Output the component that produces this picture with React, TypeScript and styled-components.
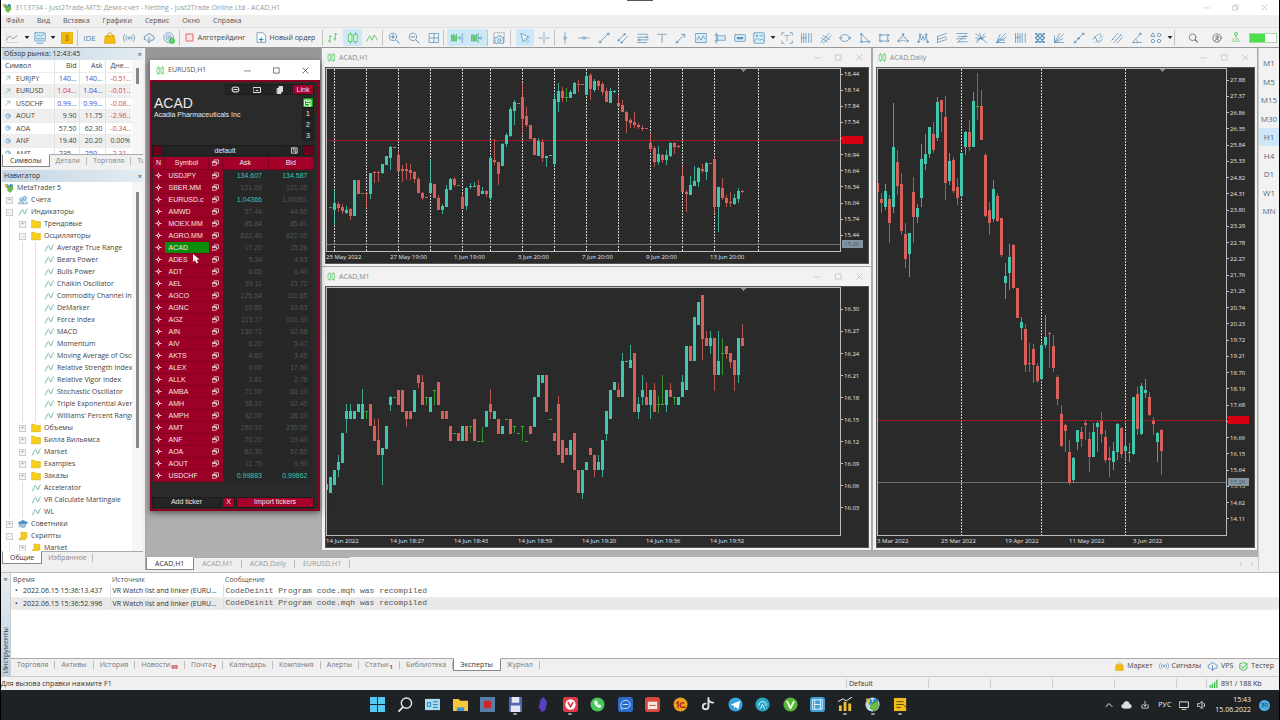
import React from "react";
import styled, { createGlobalStyle, css } from "styled-components";

const UI = '"Open Sans", "Noto Sans", sans-serif';
const ARIAL = '"Liberation Sans", Arial, sans-serif';

const GlobalStyle = createGlobalStyle`
  *, *::before, *::after { box-sizing: border-box; }
  body { margin: 0; background: #efefef; font: 7px/12px ${UI}; color: #444; }
  button { font: inherit; color: inherit; border: 0; margin: 0; padding: 0; background: none; white-space: nowrap; }
  ul { list-style: none; margin: 0; padding: 0; }
  table { border-collapse: collapse; border-spacing: 0; }
  td, th { padding: 0; font-weight: 400; text-align: left; }
  h1, h2, p { margin: 0; font: inherit; }
  svg { display: block; flex: none; }
`;

/* ---------- data ---------- */

type Tone = "g" | "r" | "l";
type Candle = [Tone, number, number, number, number];

const parse = (s: string): Candle[] =>
  s.trim().split(/\s+/).map((c) => {
    const n = c.slice(1).split(",").map(Number);
    const [a, b, d, e] = n.length === 2 ? [n[0], n[0], n[1], n[1]] : n;
    return [c[0] as Tone, a, b, d, e];
  });

const H1_DATA = parse(`
l470,473 g420,458,480,525 r455,463,475,487 r462,472,483,492 g468,479,488,492 r475,478,498,510 g391,498 r391,432 l428,430,432,432
r425,430,433,475 g368,368,432,448 r362,366,370,400 r364,367,370,395 g343,343,369,372 g318,345 g289,291,323,360 r290,293 r303,316,362,362
r345,358,362,395 r340,358,363,390 r342,360,370,390 r362,366,388,400 r380,388,430,430 r425,430,443,450 r440,443 g328,400,430,430 r402,445
r435,443,480,480 g462,468,480,492 g405,418,470,470 g385,388,420,420 r380,388,406,410 l405,408 r432,441,478,478 g412,415,468,480
g398,407,411,418 g395,407,410,412 r390,406,438,438 g412,424,433,433 r420,424,432,440 g320,325,443,450 r266,330,336,345 r335,335,372,405
g278,282,348,348 g250,254,282,290 g170,178,257,262 g150,156,182,225 r158,161 r100,140,206,250 r172,198,224,230 r224,267 r264,315
g264,274,318,318 r266,275,325,335 g317,319,323,352 g316,319 g130,146,343,348 g100,122,155,185 r112,124,144,155 l115,141,144,155
g120,125,145,145 g96,98,133,133 r90,101,104,125 r101,104 g70,78,136,136 r70,74,118,150 g88,92,120,125 r90,93,108,120 r95,103,127,135
r115,122,155,155 g115,122,158,158 g120,122,127,130 r135,158,167,167 r150,166,187,187 r182,187,214,250 r205,210,218,235 r185,215,225,235
r218,225,232,238 r226,233,236,242 r235,238 r250,280,297,305 r288,294,336,352 g288,312,336,344 r312,315,331,340 g300,316,330,345
g275,279,318,322 r275,279,290,312 r285,288,291,295 r348,378,427,427 r420,426,433,485 g378,405,435,435 g348,392,408,408 g352,354,395,410
r342,357,362,370 g336,338,365,390 r340,343 r322,326,472,490 g410,412,472,545 r385,414,443,450 r436,443,458,472 r426,457,460,472
g432,444,462,465 g415,424,448,460 r420,424,427,430`);

const M1_DATA = parse(`
g640,648,668,668 g628,675 g606,652 g562,584,606,628 g497,585 g408,430,455,495 g408,430,455,455 g430,455 g408,432 g365,408,455,455
l430,430,433,455 r408,476 r455,476,520,520 r455,517,563,563 g540,540,563,652 g475,543 g386,387,411,430 l387,390 r366,411 r366,432
r430,430,455,478 r430,455 g366,432 r322,322,346,360 r322,343,411,411 l387,387,390,411 g387,432 l366,366,369,411 r343,411 r430,455 r430,455
r475,521 l496,499 r497,521 g475,521 r475,521 l475,475,478,497 r453,521 l519,522 l477,519,522,522 g430,478 r365,408,432,455 g430,455
r453,498 g475,498 l453,456 r453,498 l475,475,478,497 l497,500 l475,475,478,521 l519,522 r475,498 g387,478 g322,388 g322,346 r322,432
l453,456 r497,521 r385,408,563,563 r518,585 r540,563 g518,563 r497,607 r606,675 g606,606,675,695 g584,607 r540,563 r562,562,607,628
g562,584,607,607 g518,518,607,628 g430,430,498,520 g366,455 g343,368 r345,366,388,388 g255,279,388,388 g279,282 g232,278,300,300
r255,432 g387,409,432,455 g322,366,388,411 r343,387,411,411 g366,366,411,455 r345,366,432,432 l385,408,411,435 l322,408,411,411
g366,366,411,432 r345,366,388,388 l387,387,390,411 g387,411 g322,343,388,388 g234,368 r234,280 g147,280 g102,171 r82,82,214,278
r190,212,236,236 g190,212,236,258 r212,212,323,370 g190,279,323,323 l212,256,259,323 r234,234,258,275 r255,256,283,300
r278,278,323,370 g212,212,323,345 r170,212,236,236`);

const DAILY_DATA = parse(`
r395,400,425,425 r430,447,458,490 g403,422,470,480 r435,447,520,580 g158,290,472,490 r300,336,408,435 r370,403,542,555 r520,553,628,655
g548,550,611,680 r380,426,500,580 g462,474,500,520 g283,327,444,470 g252,312,342,360 g230,232,313,325 r215,252,300,310 g140,157,265,272
r150,150,186,245 r138,202,400,450 g310,333,394,405 r320,331,424,430 r385,412,444,465 g308,310,437,440 g242,247,292,315 r210,247,290,302
g125,153,290,290 l70,167,170,210 r120,168,270,270 r310,316,498,500 r455,480,520,555 g390,418,508,515 r430,438,512,515 r504,505,615,622
g640,678,698,748 g582,620,668,720 r583,584,714,718 r714,714,803,805 g800,817,834,870 r822,836,946,965 r880,938,942,965 r883,897,944,1000
r940,949,993,1000 g880,885,988,990 g795,860,886,895 r845,848,852,955 r855,889,955,965 r975,982,1048,1065 r1065,1092,1188,1190
r1122,1125,1142,1205 r1170,1206,1300,1305 g1222,1224,1290,1300 g1140,1140,1177,1200 r1130,1146,1168,1190 r1110,1120,1124,1170
r1145,1168,1222,1265 g1120,1146,1220,1222 g1112,1118,1131,1205 r1085,1112,1152,1180 r1140,1161,1229,1240 r1190,1224,1230,1280
g1175,1202,1235,1260 g1118,1121,1207,1230 r1130,1134,1213,1225 g1145,1188,1203,1230 g1180,1205,1210,1235 g1040,1041,1212,1215
r1010,1033,1138,1155 g1000,1008,1152,1155 g988,1021,1028,1045 r1025,1041,1095,1098 r1100,1113,1122,1155 g1145,1149,1175,1235
r1138,1140,1203,1275`);

const range = (from: number, to: number, step: number) => {
  const out: string[] = [];
  const n = Math.round((from - to) / step);
  for (let i = 0; i <= n; i++) out.push((from - i * step).toFixed(2));
  return out;
};

const TICKERS: [string, string, string, ("a" | "b" | "ab")?][] = [
  ["USDJPY", "134.607", "134.587", "ab"], ["SBER.MM", "121.09", "121.05"], ["EURUSD.c", "1.04366", "1.04361", "a"],
  ["AMWD", "57.44", "44.50"], ["MOEX.MM", "85.84", "85.81"], ["AGRO.MM", "822.40", "822.00"], ["ACAD", "17.20", "15.26"],
  ["ADES", "5.34", "4.63"], ["ADT", "6.65", "6.40"], ["AEL", "39.11", "23.72"], ["AGCO", "125.54", "111.65"],
  ["AGNC", "10.85", "10.63"], ["AGZ", "113.77", "101.30"], ["AIN", "130.72", "32.68"], ["AIV", "6.20", "5.47"],
  ["AKTS", "4.60", "3.45"], ["ALEX", "0.00", "17.00"], ["ALLK", "2.81", "2.76"], ["AMBA", "71.00", "66.10"],
  ["AMH", "38.10", "32.40"], ["AMPH", "32.00", "28.10"], ["AMT", "250.10", "235.00"], ["ANF", "20.20", "19.40"],
  ["AOA", "62.30", "57.50"], ["AOUT", "11.75", "9.90"], ["USDCHF", "0.99883", "0.99862", "ab"],
];

const QUOTES: [string, string, string, string, string, string][] = [
  ["EURJPY", "140...", "140...", "-0.51...", "#4a4ac8", "#4a4ac8"],
  ["EURUSD", "1.04...", "1.04...", "-0.01...", "#d83a44", "#4a4ac8"],
  ["USDCHF", "0.99...", "0.99...", "-0.08...", "#4a4ac8", "#4a4ac8"],
  ["AOUT", "9.90", "11.75", "-2.96...", "#444", "#444"],
  ["AOA", "57.50", "62.30", "-0.34...", "#444", "#444"],
  ["ANF", "19.40", "20.20", "0.00%", "#444", "#444"],
  ["AMT", "235...", "250...", "-2.31...", "#444", "#4a4ac8"],
];

type Node = [number, string, string, string?];
const TREE: Node[] = [
  [0, "mt", "MetaTrader 5"], [1, "users", "Счета", "+"], [1, "ind", "Индикаторы", "-"],
  [2, "folder", "Трендовые", "+"], [2, "folder", "Осцилляторы", "-"],
  ...["Average True Range", "Bears Power", "Bulls Power", "Chaikin Oscillator", "Commodity Channel Index", "DeMarker",
    "Force Index", "MACD", "Momentum", "Moving Average of Oscillator", "Relative Strength Index", "Relative Vigor Index",
    "Stochastic Oscillator", "Triple Exponential Average", "Williams' Percent Range"].map((t): Node => [3, "ind", t]),
  [2, "folder", "Объемы", "+"], [2, "folder", "Билла Вильямса", "+"], [2, "ind", "Market", "+"],
  [2, "folder", "Examples", "+"], [2, "folder", "Заказы", "+"], [2, "ind", "Accelerator"],
  [2, "ind", "VR Calculate Martingale"], [2, "ind", "WL"], [1, "hat", "Советники", "+"],
  [1, "scroll", "Скрипты", "-"], [2, "scroll", "Market", "+"],
];

/* ---------- icons ---------- */

const B = "#5a90ba";
const G = "#3fbf4f";
const Svg = ({ s = 14, children, c = B, w = 1 }: { s?: number; children: React.ReactNode; c?: string; w?: number }) => (
  <svg width={s} height={s} viewBox="0 0 16 16" fill="none" stroke={c} strokeWidth={w} strokeLinecap="round" strokeLinejoin="round" aria-hidden="true">
    {children}
  </svg>
);

const ICONS: Record<string, React.ReactNode> = {
  chart: <><path d="M1 2v12h14" stroke="#ccc" /><path d="M1 10l4-5 4 4 6-4" stroke="#6c8c7c" /></>,
  monitor: <><rect x="1" y="1" width="14" height="11" rx="1" fill="#d8effa" /><path d="M3 6l3-2 3 2 4-3M3 9h10M4 15h8" /></>,
  dollar: <><rect x="0" y="0" width="16" height="16" rx="1" fill="#f2bd10" stroke="#dba800" /><path d="M10.500 5.500C9 4 5.500 4.500 6 6.500s4.500 1 4.500 3-3.500 2.500-5 1M8 3.500v9" stroke="#a87800" /></>,
  bag: <><path d="M2 5h12l1 10H1z" fill="#f2bd10" stroke="#e0a800" /><path d="M5 6V4a3 3 0 016 0v2" stroke="#c89000" /></>,
  signal: <><circle cx="8" cy="8" r="1.500" /><path d="M5 5a4 4 0 000 6M11 5a4 4 0 010 6M2.500 3a7 7 0 000 10M13.500 3a7 7 0 010 10" /></>,
  cloud: <path d="M4.500 11a3 3 0 010-6 4 4 0 017.500 0 3 3 0 010 6h-1.500M8 7v7M6 12l2 2 2-2" strokeWidth="1.300" />,
  target: <><circle cx="7.500" cy="7.500" r="6.500" /><circle cx="7.500" cy="7.500" r="3.500" /><circle cx="7.500" cy="7.500" r="1" /><circle cx="12" cy="12" r="3.500" fill="#63d26b" stroke={G} /></>,
  stop: <rect x="3" y="3" width="10" height="10" rx="1" fill="#fbe3e3" stroke="#dd6a6a" strokeWidth="1.500" />,
  order: <><path d="M2 1h8l4 4v10H2z" fill="#f8fcff" stroke="#5d7f9a" /><path d="M5 11h5M7.500 8.500v5" stroke="#2f7fbf" strokeWidth="1.500" /></>,
  bars: <path d="M4 5v9M2 12h2M4 6h2M11 2v9M9 9h2M11 3h2" stroke={G} />,
  candles: <path d="M4.500 1v2M4.500 13v2M2.500 3h4v10h-4zM11.500 1v2M11.500 13v2M9.500 3h4v10h-4z" stroke={G} fill="#dff7e2" />,
  line: <path d="M1 12l4-7 3 6 3-7 4 6" stroke={G} />,
  zin: <><circle cx="6.500" cy="6.500" r="5" /><path d="M10.500 10.500L15 15M4 6.500h5M6.500 4v5" strokeWidth="1.300" /></>,
  zout: <><circle cx="6.500" cy="6.500" r="5" /><path d="M10.500 10.500L15 15M4 6.500h5" strokeWidth="1.300" /></>,
  grid: <path d="M2 2h12v12H2zM8 2v12M2 8h12" />,
  shiftA: <><path d="M1 4v8M3 3v9M5 5v7M7 3v9" stroke={G} strokeWidth="1.500" /><path d="M9 8h4M11 6l2 2-2 2M15 2v12" /></>,
  shiftB: <><path d="M1 4v8M3 3v9M5 5v7M7 3v9" stroke={G} strokeWidth="1.500" /><path d="M9.500 2v12M15 8h-4M13 6l-2 2 2 2" /></>,
  camera: <><path d="M1 15V1h14v14" stroke="#888" strokeDasharray="1 2" /><path d="M3 7h3l1-2h3l1 2h3v8H3z" fill="#dceefa" /><circle cx="8.500" cy="11" r="2" /></>,
  cursor: <path d="M3 2l10 5-4 1.500 4 4-1.500 1.500-4-4L6 13z" fill="#eef8ff" />,
  cross: <path d="M8 1v5M8 10v5M1 8h5M10 8h5M8 8h.1" />,
  vline: <><path d="M8 1v5M8 10v5" /><circle cx="8" cy="8" r="1.700" /></>,
  hline: <><path d="M1 8h5M10 8h5" /><circle cx="8" cy="8" r="1.700" /></>,
  trend: <><path d="M3 13l10-10" /><circle cx="2.500" cy="13.500" r="1.300" /><circle cx="13.500" cy="2.500" r="1.300" /></>,
  channel: <><path d="M2 11l8-8M6 14l8-8" /><circle cx="2" cy="11" r="1" /><circle cx="10" cy="3" r="1" /><circle cx="6" cy="14" r="1" /></>,
  fib: <><path d="M1 3h13M1 7h10M4 10.500h11M1 14h12" /><circle cx="13" cy="7" r="1.300" /><circle cx="2.500" cy="10.500" r="1.300" /></>,
  text: <path d="M2 3h12M8 3v11" stroke="#8ba4b4" strokeWidth="1.400" />,
  arrow: <><path d="M2.500 13.500L13 3M8.500 3H13v4.500" /><circle cx="2.500" cy="13.500" r="1.200" /></>,
  wave: <path d="M1 2h14v12H1zM3 10l2-4 3 5 3-6 2 4" fill="#d8effa" />,
  label: <path d="M3 1v14M1 4h4M1 12h4M5 5h10v6H5z" fill="#d8effa" />,
  button: <><rect x="1" y="3.500" width="14" height="9" rx="1" fill="#d8effa" /><path d="M5 8h6" strokeWidth="3" /></>,
  image: <><rect x="1" y="1" width="14" height="14" rx="1" fill="#d8effa" /><path d="M2 12l4-4 3 3 3-2 3 3" /><circle cx="5" cy="5" r="1" /><path d="M9 5h4" /></>,
  tbox: <><path d="M1 4V1h3M12 1h3v3M15 12v3h-3M4 15H1v-3" /><path d="M4.500 4.500h7M8 4.500V12" stroke="#8ba4b4" /></>,
  cycles: <path d="M2 2v12M5 2v12M8 2v12M11.500 2v12M15 2v12M2 8h6" />,
  pitch: <path d="M1 14L12 2M4 15L15 5M2 8l8 5M4 5l9 5" />,
  ellipse: <><ellipse cx="8" cy="8" rx="6" ry="4.500" /><circle cx="2" cy="8" r="1.200" fill="#fff" /><circle cx="14" cy="8" r="1.200" fill="#fff" /></>,
  triangle: <><path d="M3 3v10h10z" /><circle cx="3" cy="3" r="1.200" fill="#fff" /><circle cx="13" cy="13" r="1.200" fill="#fff" /><circle cx="3" cy="13" r="1.200" fill="#fff" /></>,
  rect: <><path d="M3 4h10v8H3z" /><circle cx="3" cy="4" r="1.300" fill="#fff" /><circle cx="13" cy="4" r="1.300" fill="#fff" /><circle cx="3" cy="12" r="1.300" fill="#fff" /><circle cx="13" cy="12" r="1.300" fill="#fff" /></>,
  ell5: <><path d="M2 12l2-4h2l2-5 2 5h2l2 4M5 12l3-1 3 1" strokeDasharray="3 1.500" /><circle cx="8" cy="3" r="1" /><circle cx="2" cy="12" r="1" /><circle cx="14" cy="12" r="1" /></>,
  ell3: <><path d="M2 13l2-8 2 6 2-6 2 6 2-6 2 8" /><circle cx="4" cy="3.500" r="1.200" /><circle cx="12" cy="3.500" r="1.200" /><circle cx="2" cy="13" r="1.200" /><circle cx="14" cy="13" r="1.200" /></>,
  regr: <path d="M2 6l12-4M2 10l9-3M2 14l12-4M2 6v8M12 7h2" />,
  gann: <path d="M1 2h14M3 6h12M1 9h12M3 13h12M2 14L13 4" />,
  fan: <path d="M1 2l14 12M2 14L13 2M6 2l3 8M1 8l10 1M14 6L3 11" />,
  arcs: <path d="M2 14L14 2M2 14L15 7M2 14l5-11M2 14h11M5 10l8 1" />,
  zones: <path d="M2 2v12M5 2v12M8 2v12M11 2v12M15 2v12M2 7h6" />,
  lattice: <path d="M2 2l12 12M14 2L2 14M8 2l6 6-6 6-6-6zM2 2h2M12 2h2M2 14h2M12 14h2" strokeWidth="1.500" />,
  rays: <path d="M2 14L14 3M2 14L9 2M2 14V5M2 14h12M2 14l11-5" />,
  tl: <><path d="M2.500 13.500L13 3" /><circle cx="2.500" cy="13.500" r="1.200" /><circle cx="7.500" cy="8.500" r="1.200" /><circle cx="13.500" cy="2.500" r="1.200" /></>,
  dash: <path d="M1 10l7-7M5 14l3-3M10 9l4-4M4 6l3 6M11 2v4M8 14l6-4" strokeDasharray="3 1" />,
  para: <path d="M1 11l8-9M4 14L13 4M8 15l7-8M2 10h1M12 4h2" />,
  angle: <><path d="M2 14L12 3M2 14h12M9 14a5 5 0 00-2-4" /><circle cx="12.500" cy="2.500" r="1.200" /></>,
  shapes: <><path d="M4 1.500L6.500 6h-5z" /><circle cx="12" cy="4" r="2.300" /><circle cx="4" cy="12" r="2.300" /><circle cx="12" cy="12" r="2.300" /></>,
  search: <><circle cx="7.500" cy="7" r="4.500" stroke="#666" /><path d="M11 10.500l3 3" stroke="#666" strokeWidth="1.400" /></>,
  user: <><circle cx="8" cy="8" r="5.500" stroke="#555" /><circle cx="8" cy="6.800" r="1.700" stroke="#555" /><path d="M5 11.500c1-2.500 5-2.500 6 0" stroke="#555" /></>,
  ind: <path d="M2 13c2-1 3-9 5-9s2 7 4 7 1-7 4-8" stroke="#4fa892" strokeWidth="1.300" />,
  folder: <path d="M1 2h5l2 2h7v10H1z" fill="#f5cf1d" stroke="#dcae10" />,
  users: <><circle cx="10.500" cy="5" r="3" fill="#bfe0f5" /><circle cx="5" cy="7" r="2.500" fill="#bfe0f5" /><path d="M1 14c0-5 8-5 8 0M7 10c3-3 8-1 8 4H1" fill="#d9eefa" /></>,
  hat: <><path d="M0 6l8-4 8 4-8 4z" fill="#4a95d0" /><path d="M4 8v4c2 2 6 2 8 0V8" fill="#9fcbe9" /><path d="M2 7v6" /></>,
  scroll: <path d="M5 2h9v9h-2v3H2v-3h3z" fill="#f5c91d" stroke="#dcae10" />,
  mt: <><path d="M2 3l4-1 2 5 2-5 4 1-1 4-3 1-2-2-3 2z" fill="#2f86d0" stroke="#2f86d0" /><path d="M7 8l6-4 1 6-4 5-4-3z" fill="#6fc03a" stroke="#4a9a2a" /><path d="M2 2l3 1-1 4z" fill="#f2c81d" stroke="#f2c81d" /></>,
};

const Icon = ({ n, s }: { n: string; s?: number }) => <Svg s={s}>{ICONS[n]}</Svg>;

/* ---------- frame ---------- */

const Screen = styled.div`
  display: flex; flex-direction: column; height: 100vh; min-width: 960px; overflow: hidden;
  border: solid #000; border-width: 0 1px; background: #efefef;
`;
const TitleBar = styled.header`
  display: flex; align-items: center; height: 15px; padding: 0 11px 0 1px; gap: 3px; background: #fff; color: #999; position: relative;
  h1 { flex: 1; }
`;
const Notch = styled.span`
  position: absolute; top: 0; left: 50%; width: 26px; height: 1px; margin-left: -13px; background: #555;
`;
const WinButtons = styled.div<{ $gap?: number; $c?: string }>`
  display: flex; align-items: center; gap: ${(p) => p.$gap ?? 20}px; color: ${(p) => p.$c ?? "#bbb"};
`;
const MenuBar = styled.nav`
  display: flex; height: 12px; padding-left: 5px; gap: 13px; color: #555;
`;
const Toolbar = styled.div`
  display: flex; align-items: center; height: 21px; border-top: 1px solid #e0e0e0; border-bottom: 1px solid #999;
  background: #f2f2f2;
`;
const Tool = styled.button<{ $w?: number; $on?: boolean }>`
  display: flex; align-items: center; justify-content: center; gap: 3px; height: 17px;
  flex: ${(p) => (p.$w ? `0 0 ${p.$w}px` : "1 1 0")};
  background: ${(p) => (p.$on ? "#cde9f8" : "none")};
`;
const Caret = styled.span`
  flex: none; width: 8px; height: 3px; background: #222; clip-path: polygon(20% 0, 80% 0, 50% 100%);
`;
const Sep = styled.i<{ $m?: number }>`
  flex: none; width: 1px; height: 16px; margin-right: ${(p) => p.$m ?? 0}px; background: #c4c4c4;
`;
const Ide = styled.span`
  color: #4a86b4; font-size: 8px;
`;
const Level = styled.span`
  display: flex; flex-direction: column; align-items: center; color: #3fbf4f; font-size: 5px; line-height: 5px;
`;
const Battery = styled.span`
  flex: none; width: 28px; height: 10px; margin: 0 2px 0 0; border: 1px solid #a8d8a8;
  background: linear-gradient(90deg, #4be04b 56%, #fff 56%);
`;

const Middle = styled.main`
  display: grid; grid-template-columns: 145px minmax(0, 1fr) 21px; flex: 1; min-height: 0;
`;
const Side = styled.aside`
  display: flex; flex-direction: column; min-height: 0; padding: 0 2px 6px 1px; border-right: 1px solid #aaa; background: #f0f0f0;
`;
const PanelHead = styled.h2`
  display: flex; flex: none; justify-content: space-between; height: 12px; padding: 0 1px 0 2px; color: #333;
  background: linear-gradient(90deg, #c6d6e4, #e2ecf2);
`;
const CloseX = styled.button`
  color: #444; font-size: 8px;
`;
const Clip = styled.div<{ $h?: number }>`
  display: flex; min-height: 0; overflow: hidden; background: #fff;
  flex: ${(p) => (p.$h ? `0 0 ${p.$h}px` : "1 1 0")};
`;
const Scroll = styled.div<{ $top: number; $h: number }>`
  flex: none; width: 11px; background: #f6f6f6;
  &::before { content: ""; display: block; width: 3px; height: ${(p) => p.$h}px; margin: ${(p) => p.$top}px 0 0 4px; background: #888; }
`;
const QuoteTable = styled.table`
  flex: 1; table-layout: fixed; align-self: flex-start; width: 100%; white-space: nowrap;
  tr { height: 12px; }
  tbody tr:nth-child(even) { height: 13px; background: #efefef; }
  td, th { overflow: hidden; border-right: 1px solid #e2e2e2; border-bottom: 1px solid #ececec; padding-right: 2px; text-align: right; line-height: 11px; }
  td:first-child, th:first-child { text-align: left; padding-left: 3px; }
  td:last-child { color: #e0444c; }
  td:last-child, th:last-child { text-align: left; padding-left: 5px; border-right-color: transparent; }
`;
const Sym = styled.span`
  display: flex; align-items: center; gap: 5px;
`;
const Tabs = styled.div<{ $h?: number }>`
  display: flex; flex: none; height: ${(p) => p.$h ?? 13}px; overflow: hidden; color: #888;
`;
const Tab = styled.button<{ $on?: boolean; $l?: number; $r?: number }>`
  display: flex; align-items: center; padding: 0 ${(p) => p.$r ?? 7}px 0 ${(p) => p.$l ?? 7}px; height: 13px; line-height: 12px;
  border-top: 1px solid #aaa; position: relative;
  &::after { content: ""; position: absolute; right: 0; top: 2px; width: 1px; height: 8px; background: #bbb; }
  ${(p) => p.$on && css`background: #fff; color: #333; border: 1px solid #888; border-top-color: #fff; &::after { display: none; }`}
  small { color: #d83040; font-size: 6px; font-weight: 700; align-self: flex-end; line-height: 8px; padding-left: 1px; }
`;
const TabFill = styled.i`
  flex: 1; border-top: 1px solid #aaa;
`;
const Tree = styled.ul`
  flex: 1; min-width: 0; overflow: hidden; white-space: nowrap;
`;
const TreeRow = styled.li<{ $root?: boolean }>`
  display: flex; align-items: center; height: 12px; padding-left: ${(p) => (p.$root ? 0 : 1)}px;
`;
const Guide = styled.i`
  flex: none; width: 13px; height: 12px; background: linear-gradient(#e2e2e2, #e2e2e2) 6px 0 / 1px 100% no-repeat;
`;
const Expander = styled.button`
  flex: none; width: 7px; height: 7px; margin: 0 3px; border: 1px solid #ccc; background: #f6f6f6; color: #888; font-size: 6px; line-height: 5px;
`;
const TreeIcon = styled.span`
  display: flex; flex: none; justify-content: center; width: 14px; margin-right: 1px;
`;

/* ---------- charts ---------- */

const Desk = styled.section`
  display: flex; flex-direction: column; min-height: 0; min-width: 0;
`;
const Mdi = styled.div`
  position: relative; display: grid; flex: 1; min-height: 0; padding-bottom: 6px;
  grid-template-columns: 175px minmax(0, 551fr) minmax(0, 386fr); grid-template-rows: minmax(0, 219fr) minmax(0, 283fr);
  background: linear-gradient(#989898, #b0b0b0);
`;
const ChartWin = styled.article<{ $area: string }>`
  display: flex; flex-direction: column; grid-area: ${(p) => p.$area}; min-height: 0; padding: 0 2px 2px 3px;
  border: solid #aaa; border-width: 0 1px 1px 1px; background: #f2f2f2;
`;
const ChartHead = styled.header`
  display: flex; flex: none; align-items: center; gap: 3px; height: 19px; padding: 0 6px 0 2px; color: #8a8a8a;
  h2 { flex: 1; }
`;
const ChartBody = styled.div`
  display: grid; flex: 1; min-height: 0; background: #2a2a2a; border: 1px solid #555;
  grid-template-columns: minmax(0, 1fr) 27px; grid-template-rows: minmax(0, 1fr) 11px;
  color: #e6e6e6; font-size: 6px; line-height: 10px;
`;
const Plot = styled.svg`
  width: 100%; height: 100%; border: 1px solid #bbb; min-width: 0;
`;
const Prices = styled.ul<{ $top: number; $bottom: number }>`
  position: relative; display: flex; flex-direction: column; justify-content: space-between;
  padding: ${(p) => p.$top}px 0 ${(p) => p.$bottom}px;
  li { display: flex; align-items: center; gap: 1px; height: 10px; }
  li::before { content: ""; width: 2px; height: 1px; background: #bbb; }
`;
const Tag = styled.span<{ $y: number; $c: string }>`
  position: absolute; left: 1px; top: ${(p) => p.$y}px; width: 21px; height: 8px; line-height: 8px; padding-left: 2px;
  background: ${(p) => p.$c}; color: #4c5a66;
`;
const Times = styled.ul`
  display: grid; grid-auto-flow: column; grid-auto-columns: 64px; overflow: hidden; white-space: nowrap;
`;

const FILL: Record<Tone, string> = { g: "#3fc8ae", r: "#d9605a", l: "#35b030" };

type ChartProps = {
  title: string; area: string; data: Candle[]; x0: number; y0: number; lines: number[]; red?: number; gray?: number;
  prices: string[]; top: number; bottom: number; times: string[]; mark: number; redTag?: number; grayTag?: number;
};
/* candle values are stored at three units per pixel */
const Chart = (p: ChartProps) => {
  const y = (v: number) => Math.round((v - p.y0) / 3);
  return (
    <ChartWin $area={p.area}>
      <ChartHead>
        <Icon n="candles" s={9} />
        <h2>{p.title}</h2>
        <WindowButtons gap={14} s={7} />
      </ChartHead>
      <ChartBody>
        <Plot shapeRendering="crispEdges">
          {p.lines.map((x) => (
            <line key={x} x1={Math.floor(x / 3) + 0.5} x2={Math.floor(x / 3) + 0.5} y1="0" y2="100%" stroke="#d0d0d0" strokeDasharray="2 1" />
          ))}
          {p.red && <rect x="0" y={y(p.red)} width="100%" height="1" fill="#a01c28" />}
          {p.gray && <rect x="0" y={y(p.gray)} width="100%" height="1" fill="#6c7074" />}
          {p.data.map(([c, hi, t, b, lo], i) => {
            const x = p.x0 + i * 4;
            return (
              <g key={i} fill={FILL[c]}>
                <rect x={x} y={y(hi)} width="1" height={Math.max(1, y(lo) - y(hi))} opacity="0.8" />
                <rect x={x - 1} y={y(t)} width="3" height={Math.max(1, y(b) - y(t))} />
              </g>
            );
          })}
          <path d={`M${p.mark - 3} 0h6l-3 3z`} fill="#888" />
        </Plot>
        <Prices $top={p.top} $bottom={p.bottom}>
          {p.prices.map((v) => <li key={v}>{v}</li>)}
          {p.redTag && <Tag $y={p.redTag} $c="#d60010" />}
          {p.grayTag && <Tag $y={p.grayTag} $c="#8494a0">15.26</Tag>}
        </Prices>
        <Times>{p.times.map((t) => <li key={t}>{t}</li>)}</Times>
      </ChartBody>
    </ChartWin>
  );
};

const WindowButtons = ({ gap, s, c, restore }: { gap: number; s: number; c?: string; restore?: boolean }) => (
  <WinButtons $gap={gap} $c={c}>
    <button aria-label="Minimize"><Svg s={s} c="currentColor" w={1.4}><path d="M1 9h14" /></Svg></button>
    <button aria-label="Maximize">
      <Svg s={s} c="currentColor" w={1.6}>{restore ? <path d="M2 5h9v9H2zM5 5V2h9v9h-3" /> : <path d="M2 2h12v12H2z" />}</Svg>
    </button>
    <button aria-label="Close"><Svg s={s} c="currentColor" w={1.8}><path d="M2 2l12 12M14 2L2 14" /></Svg></button>
  </WinButtons>
);

/* ---------- ticker window ---------- */

const Float = styled.article`
  position: absolute; left: 4px; top: 12px; width: 170px; background: #2a2a2a; box-shadow: 0 2px 6px rgba(0, 0, 0, 0.5);
  color: #f0e6e8; font-family: ${ARIAL};
`;
const FloatHead = styled.header`
  display: flex; align-items: center; gap: 3px; height: 20px; padding: 0 11px 0 6px; background: #fff; color: #555; font-family: ${UI};
  h2 { flex: 1; }
`;
const FloatBody = styled.div`
  padding: 2px 3px 0 0; border: solid #86001f; border-width: 2px 3px 2px 2px;
`;
const MiniBar = styled.div`
  display: flex; justify-content: flex-end; gap: 1px; height: 11px;
`;
const Cell = styled.button<{ $w?: number; $bg?: string }>`
  display: flex; align-items: center; justify-content: center; height: 11px;
  flex: ${(p) => (p.$w ? `0 0 ${p.$w}px` : "1 1 0")}; background: ${(p) => p.$bg ?? "#242424"}; border: 1px solid #1c1c1c;
`;
const Heading = styled.div`
  display: flex; justify-content: space-between; height: 48px; padding-left: 2px; margin-top: 2px;
  h3 { margin: 0; font-size: 14px; font-weight: 400; line-height: 12px; }
`;
const Slots = styled.div`
  display: flex; flex-direction: column; width: 12px;
`;
const Line = styled.div`
  display: flex; gap: 1px; height: 11px; margin: 0 0 1px;
`;
const TickerTable = styled.table`
  width: 100%; table-layout: fixed; background: #272727;
  tr { height: 12px; }
  th, td { line-height: 11px; }
  th { background: #a50029; border: 1px solid #7c001f; border-top: 0; text-align: center; }
  td:nth-child(-n + 3) { background: #9c0027; border-bottom: 1px solid #830020; }
  td:nth-child(2) { padding-left: 4px; white-space: nowrap; }
  td:nth-child(n + 4) { padding-right: 6px; text-align: right; }
  td svg, th svg { margin: 0 auto; }
`;
const TickerRow = styled.tr<{ $on?: boolean }>`
  ${(p) => p.$on && css`&& td:nth-child(2) { background: #0c8c0c; }`}
`;
const Price = styled.td<{ $live?: boolean }>`
  color: ${(p) => (p.$live ? "#35c8a8" : "#545454")};
`;
const Footer = styled.div`
  display: flex; height: 12px; margin-top: 15px; gap: 1px;
`;
const Pointer = styled.span`
  position: absolute; left: 43px; top: 194px;
`;
const RestoreIcon = () => <Svg s={7} c="#f0d8dc" w={1.8}><path d="M1 6h9v8H1zM5 6V2h10v8h-4M1 8h9" /></Svg>;
const DotIcon = () => <Svg s={7} c="#f0d8dc" w={2}><path d="M8 2v3M8 11v3M2 8h3M11 8h3" /><circle cx="8" cy="8" r="3" /></Svg>;

const TickerWindow = () => (
  <Float>
    <FloatHead>
      <Icon n="candles" s={9} />
      <h2>EURUSD,H1</h2>
      <WindowButtons gap={22} s={7} c="#444" />
    </FloatHead>
    <FloatBody>
      <MiniBar>
        <Cell $w={20} aria-label="Settings"><Svg s={9} c="#ddd" w={2}><ellipse cx="8" cy="8" rx="6" ry="4.500" /><path d="M5 8h6" /></Svg></Cell>
        <Cell $w={22} aria-label="Picture"><Svg s={8} c="#ddd" w={2}><rect x="1" y="3" width="14" height="10" /><path d="M6 9h4" /></Svg></Cell>
        <Cell $w={22} aria-label="Copy"><Svg s={8} c="#ddd" w={2}><path d="M3 5h7v10H3zM6 5V1h7v10h-3" fill="#ddd" /></Svg></Cell>
        <Cell $w={22} $bg="#a50029">Link</Cell>
      </MiniBar>
      <Heading>
        <div>
          <h3>ACAD</h3>
          <p>Acadia Pharmaceuticals Inc</p>
        </div>
        <Slots>
          <Cell $w={11} $bg="#15a015" aria-label="Save"><Svg s={8} c="#e8ffe8" w={2}><path d="M2 2h12v12H2zM5 9h6v5M5 2v3h6" /></Svg></Cell>
          <Cell $w={11}>1</Cell>
          <Cell $w={11}>2</Cell>
          <Cell $w={11}>3</Cell>
        </Slots>
      </Heading>
      <Line>
        <Cell $w={11} $bg="#6c001a" aria-label="Previous list" />
        <Cell>default</Cell>
        <Cell $w={14} aria-label="Save list"><Svg s={7} c="#ddd" w={2}><path d="M2 2h12v12H2zM5 9h6v5M5 2v3h6" /></Svg></Cell>
        <Cell $w={12} $bg="#6c001a" aria-label="Next list" />
      </Line>
      <TickerTable>
        <colgroup><col width="12" /><col width="44" /><col width="14" /><col /><col /></colgroup>
        <thead><tr><th>N</th><th>Symbol</th><th><RestoreIcon /></th><th>Ask</th><th>Bid</th></tr></thead>
        <tbody>
          {TICKERS.map(([s, a, b, live]) => (
            <TickerRow key={s} $on={s === "ACAD"}>
              <td><DotIcon /></td><td>{s}</td><td><RestoreIcon /></td>
              <Price $live={!!live}>{a}</Price><Price $live={live === "ab"}>{b}</Price>
            </TickerRow>
          ))}
        </tbody>
      </TickerTable>
      <Footer>
        <Cell $w={69}>Add ticker</Cell>
        <Cell $w={13} $bg="#a50029">X</Cell>
        <Cell $bg="#a50029">Import tickers</Cell>
      </Footer>
    </FloatBody>
    <Pointer><svg width="7" height="10" viewBox="0 0 7 10"><path d="M0 0v8l2-2 1.500 3.500 1.500-1L3.800 5.500H6.500z" fill="#fff" /></svg></Pointer>
  </Float>
);

/* ---------- right strip, toolbox, taskbar ---------- */

const Frames = styled.nav`
  display: flex; flex-direction: column; padding-top: 6px; border-left: 1px solid #ccc; color: #4a6c88; font-size: 8px; background: #f2f2f2;
`;
const Frame = styled.button<{ $on?: boolean }>`
  height: 18px; background: ${(p) => (p.$on ? "#cde6f8" : "none")};
  &:nth-child(even) { height: 19px; }
`;
const DeskTabs = styled.div`
  display: flex; height: 13px; color: #999; background: #efefef;
`;
const Arrows = styled.span`
  display: flex; gap: 9px; margin-left: auto; padding-right: 5px; color: #999;
`;
const Toolbox = styled.section`
  display: grid; grid-template-columns: 9px minmax(0, 1fr); height: 104px; margin-top: 2px; border-top: 1px solid #bbb;
`;
const Strip = styled.div`
  display: flex; flex-direction: column; align-items: center; justify-content: space-between; background: linear-gradient(#e8eef2, #bccfdf);
  span { writing-mode: vertical-rl; transform: rotate(180deg); line-height: 9px; color: #444; padding-top: 3px; }
`;
const ToolMain = styled.div`
  display: flex; flex-direction: column; border-left: 1px solid #ccc; background: #fff;
`;
const LogTable = styled.table`
  width: 100%; table-layout: fixed; white-space: nowrap;
  tr { height: 12px; }
  th { color: #555; padding-left: 2px; line-height: 11px; }
  td { height: 12px; line-height: 11px; padding-left: 2px; overflow: hidden; border-left: 1px solid #ddd; border-bottom: 1px solid #eee; color: #333; }
  td:first-child { padding-left: 4px; border-left: 0; }
  td:last-child { color: #555; font: 8px/10px "Liberation Mono", monospace; }
  tbody tr:last-child { background: #e9e9e9; }
`;
const BottomTabs = styled.div`
  display: flex; align-items: flex-start; height: 18px; margin-top: auto; background: #f0f0f0; color: #777;
`;
const Services = styled.div`
  display: flex; gap: 6px; height: 14px; padding: 1px 5px 0 0; color: #444; border-top: 1px solid #aaa;
  button { display: flex; align-items: center; gap: 3px; }
`;
const StatusBar = styled.footer`
  display: grid; grid-template-columns: minmax(0, 845fr) minmax(0, 360fr) 73px; align-items: center; height: 14px;
  border-top: 1px solid #ccc; background: #f0f0f0; color: #333;
`;
const StatusCell = styled.span`
  display: flex; gap: 3px; align-items: center; border-left: 1px solid #ccc; padding-left: 2px; height: 9px; line-height: 9px;
  &:first-child { border: 0; padding: 0; }
`;
const Notches = styled.i`
  flex: 1; margin-left: 52px; height: 9px; background: repeating-linear-gradient(90deg, #ccc 0 1px, transparent 1px 62px);
`;
const Taskbar = styled.footer`
  display: grid; grid-template-columns: 363px 1fr auto; align-items: center; height: 30px; background: #1f2224; color: #eee;
`;
const Apps = styled.div`
  display: grid; grid-template-columns: repeat(20, minmax(0, 1fr)); width: 550px;
  button { display: flex; flex-direction: column; align-items: center; gap: 1px; padding-top: 2px; }
`;
const Running = styled.i<{ $on: boolean }>`
  width: 4px; height: 2px; border-radius: 1px; background: ${(p) => (p.$on ? "#999" : "transparent")};
`;
const Tray = styled.div`
  display: flex; align-items: center; gap: 8px; padding-right: 9px;
`;
const Clock = styled.time`
  text-align: right; line-height: 10px; font-size: 7px;
`;
const Badge = styled.span`
  width: 11px; height: 11px; border-radius: 50%; background: #4cb0e8; color: #123; font-size: 6px; line-height: 11px; text-align: center;
`;

const disc = (fill: string, glyph: React.ReactNode) => <><circle cx="8" cy="8" r="7.500" fill={fill} stroke="none" />{glyph}</>;
const tile = (fill: string, glyph: React.ReactNode) => <><rect x="0" y="0" width="16" height="16" rx="3" fill={fill} stroke="none" />{glyph}</>;
const APPS: [string, React.ReactNode, boolean][] = [
  ["Start", <path d="M0 0h7.500v7.500H0zM8.500 0H16v7.500H8.500zM0 8.500h7.500V16H0zM8.500 8.500H16V16H8.500z" fill="#58c8f4" stroke="none" />, false],
  ["Search", <><circle cx="9" cy="6.500" r="5.500" stroke="#e6e6e6" strokeWidth="1.500" /><path d="M5 11l-4 4" stroke="#e6e6e6" strokeWidth="1.800" /></>, false],
  ["Panel", <><rect y="2" width="16" height="12" fill="#a8dcf2" stroke="none" /><path d="M3 6h3v4H3zM9 5h4M9 8h4M9 11h4" stroke="#2a78b0" /></>, false],
  ["Files", <><path d="M0 2h6l2 2h8v11H0z" fill="#f7c73c" stroke="none" /><path d="M4 11h8v4H4z" fill="#3f8fd8" stroke="none" /></>, false],
  ["Recorder", <><rect width="16" height="16" fill="#5a7eaa" stroke="none" /><rect x="4" y="4" width="8" height="8" rx="2" fill="#d02828" stroke="none" /></>, false],
  ["Commander", <><path d="M1 0h14v16H1z" fill="#5264b4" stroke="none" /><path d="M4 0h8v6H4zM3 9h10v7H3z" fill="#e6e6f2" stroke="none" /></>, true],
  ["Notes", <path d="M9 0l4 5-2 9-4 2-3-5 2-8z" fill="#5a3ec0" stroke="none" />, false],
  ["Vivaldi", tile("#e23a48", <><circle cx="8" cy="8" r="5.500" fill="#fff" stroke="none" /><path d="M5.500 6l2.500 4.500L10.500 6" stroke="#e23a48" strokeWidth="1.800" /></>), true],
  ["WhatsApp", disc("#4ac75a", <path d="M5 5c0 4 3 6 6 6l.5-2-2-.5-1 .5-1.500-1.500L8 6.500 7 4.500z" fill="#fff" stroke="#fff" />), false],
  ["Chat", tile("#2a6ac8", <path d="M3 8a5 4.500 0 1110 0 5 4.500 0 01-7 4l-2 1zM5.500 8h5" stroke="#cfe4ff" />), false],
  ["Calendar", tile("#d8483c", <><rect x="3" y="5" width="10" height="8" fill="#f4e8e0" stroke="none" /><path d="M5 9h6" stroke="#d8483c" /></>), false],
  ["1C", disc("#e8a020", <path d="M4 6.500L5.500 5v6M11.500 6.500A2.500 2.500 0 109 11h4" stroke="#b02818" strokeWidth="1.500" />), false],
  ["Media", <path d="M9 1v9a3 3 0 11-3-3M9 3c1 2 3 3 5 3" stroke="#d8e4e8" strokeWidth="2" />, false],
  ["Telegram", disc("#36a6e0", <path d="M3 8l10-4-2 9-3-2.500-1.500 1.500V9.500z" fill="#fff" stroke="none" />), false],
  ["Signals", disc("#2aa6c4", <path d="M4 9a4 4 0 018 0M6 12l2-4 2 4" stroke="#e0f6ff" />), false],
  ["VR", disc("#56b43a", <path d="M4.500 5L8 12l3.500-7" stroke="#eaffda" strokeWidth="2" />), false],
  ["Editor", tile("#3f9fd8", <path d="M5 3v10M11 3v10M5 8h6M3 3h10v10H3z" stroke="#e0f4ff" />), false],
  ["Analytics", <><path d="M1 15V9h3v6M6 15V5h3v10M11 15V7h3v8" fill="#f0c030" stroke="none" /><path d="M0 5l5-3 4 2 6-4" stroke="#fff" /></>, true],
  ["MetaTrader", <><circle cx="8" cy="8" r="7.500" fill="#c8dce8" stroke="none" />{ICONS.mt}</>, true],
  ["MetaEditor", <><rect x="1" y="1" width="13" height="14" fill="#f0bc20" stroke="none" /><path d="M4 5h7M4 8h7M4 11h4M12 9l3 3" stroke="#604800" /></>, true],
];

const DRAW_A = ["vline", "hline", "trend", "channel", "fib", "text", "arrow", "wave", "label", "button", "image"];
const DRAW_B = ["tbox", "cycles", "pitch", "ellipse", "triangle", "rect", "ell5", "ell3", "regr", "gann", "fan", "arcs", "zones", "lattice", "rays", "tl", "dash", "para", "angle", "shapes"];

const T = ({ n, w, on }: { n: string; w?: number; on?: boolean }) => (
  <Tool $w={w} $on={on} aria-label={n}><Icon n={n} s={12} /></Tool>
);

export default function App() {
  return (
    <Screen>
      <GlobalStyle />
      <TitleBar>
        <Icon n="mt" s={10} />
        <h1>3113734 - Just2Trade-MT5: Демо-счет - Netting - Just2Trade Online Ltd - ACAD,H1</h1>
        <Notch />
        <WindowButtons gap={22} s={7} restore />
      </TitleBar>
      <MenuBar>
        {["Файл", "Вид", "Вставка", "Графики", "Сервис", "Окно", "Справка"].map((m) => <button key={m}>{m}</button>)}
      </MenuBar>
      <Toolbar>
        <T n="chart" w={22} /><Caret /><T n="monitor" w={18} /><Caret /><T n="dollar" w={20} /><Sep />
        <Tool $w={23}><Ide>IDE</Ide></Tool>
        <T n="bag" w={18} /><T n="signal" w={20} /><T n="cloud" w={20} /><T n="target" w={20} /><Sep />
        <Tool $w={69}><Icon n="stop" s={11} />Алготрейдинг</Tool>
        <Tool $w={73}><Icon n="order" s={11} />Новый ордер</Tool><Sep />
        <T n="bars" w={20} /><T n="candles" w={19} on /><T n="line" w={20} /><Sep />
        <T n="zin" w={21} /><T n="zout" w={20} /><T n="grid" w={19} /><Sep $m={3} />
        <T n="shiftA" w={20} on /><T n="shiftB" w={20} on /><Sep />
        <T n="camera" w={22} /><Sep $m={5} />
        <T n="cursor" w={18} on /><T n="cross" w={20} /><Sep />
        {DRAW_A.map((n) => <T key={n} n={n} />)}<Caret />
        {DRAW_B.map((n) => <T key={n} n={n} />)}<Caret /><Sep />
        <T n="search" w={36} /><T n="user" w={12} />
        <Tool $w={26}><Level><Svg s={6} c={G} w={2}><circle cx="8" cy="5" r="4" /><path d="M8 9v7" /></Svg>LVL</Level></Tool>
        <Battery />
      </Toolbar>

      <Middle>
        <Side>
          <PanelHead>Обзор рынка: 12:43:45<CloseX aria-label="Close">×</CloseX></PanelHead>
          <Clip $h={94}>
            <QuoteTable>
              <colgroup><col width="52" /><col width="25" /><col width="26" /><col /></colgroup>
              <thead><tr><th>Символ</th><th>Bid</th><th>Ask</th><th>Дне...</th></tr></thead>
              <tbody>
                {QUOTES.map(([s, b, a, d, cb, ca], i) => (
                  <tr key={s}>
                    <td><Sym>{i < 3
                      ? <Svg s={6} c="#5aa888" w={1.6}><path d="M2 14L13 3M5 3h8v8" /></Svg>
                      : <Svg s={6} c="#5a9ccc" w={2}><circle cx="8" cy="8" r="6" /><path d="M8 4v4h3" /></Svg>}{s}</Sym></td>
                    <td style={{ color: cb }}>{b}</td><td style={{ color: ca }}>{a}</td>
                    <td style={{ color: d === "0.00%" ? "#444" : undefined }}>{d}</td>
                  </tr>
                ))}
              </tbody>
            </QuoteTable>
            <Scroll $top={8} $h={16} />
          </Clip>
          <Tabs $h={16}><Tab $on>Символы</Tab><Tab $l={6}>Детали</Tab><Tab $l={6}>Торговля</Tab><Tab $l={6}>Тики</Tab></Tabs>
          <PanelHead>Навигатор<CloseX aria-label="Close">×</CloseX></PanelHead>
          <Clip>
            <Tree>
              {TREE.map(([d, icon, label, ex], i) => (
                <TreeRow key={i} $root={d === 0}>
                  {Array.from({ length: Math.max(0, d - 1) }, (_, k) => <Guide key={k} />)}
                  {d > 0 && (ex ? <Expander>{ex}</Expander> : <Guide />)}
                  <TreeIcon><Icon n={icon} s={10} /></TreeIcon>{label}
                </TreeRow>
              ))}
            </Tree>
            <Scroll $top={10} $h={256} />
          </Clip>
          <Tabs><Tab $on>Общие</Tab><Tab $l={6}>Избранное</Tab><TabFill /></Tabs>
        </Side>

        <Desk>
          <Mdi>
            <Chart title="ACAD,H1" area="1 / 2 / 2 / 3" data={H1_DATA} x0={3} y0={57} red={271} gray={583} mark={416}
              lines={[22, 118, 214, 310, 406, 490, 586, 682, 778, 874, 970, 1066, 1162, 1294]}
              prices={range(18.44, 15.44, 0.3)} top={1} bottom={12} redTag={68} grayTag={172}
              times={["25 May 2022", "27 May 19:00", "1 Jun 19:00", "3 Jun 20:00", "7 Jun 20:00", "9 Jun 20:00", "13 Jun 20:00"]} />
            <Chart title="ACAD,M1" area="2 / 2 / 3 / 3" data={M1_DATA} x0={-1} y0={61} mark={416} lines={[]}
              prices={range(16.3, 16.03, 0.03)} top={17} bottom={23}
              times={["14 Jun 2022", "14 Jun 18:27", "14 Jun 18:43", "14 Jun 18:59", "14 Jun 19:20", "14 Jun 19:36", "14 Jun 19:52"]} />
            <Chart title="ACAD,Daily" area="1 / 3 / 3 / 4" data={DAILY_DATA} x0={-1} y0={57} red={1110} gray={1296} mark={284}
              lines={[251, 491, 743]} prices={range(27.88, 14.11, 0.51)} top={7} bottom={12} redTag={348} grayTag={410}
              times={["3 Mar 2022", "25 Mar 2022", "19 Apr 2022", "11 May 2022", "3 Jun 2022"]} />
            <TickerWindow />
          </Mdi>
          <DeskTabs>
            {["ACAD,H1", "ACAD,M1", "ACAD,Daily", "EURUSD,H1"].map((t) => (
              <Tab key={t} $l={8} $r={9} $on={t === "ACAD,H1"}>{t}</Tab>
            ))}
            <Arrows><button aria-label="Previous">‹</button><button aria-label="Next">›</button></Arrows>
          </DeskTabs>
        </Desk>

        <Frames>
          {["M1", "M5", "M15", "M30", "H1", "H4", "D1", "W1", "MN"].map((f) => <Frame key={f} $on={f === "H1"}>{f}</Frame>)}
        </Frames>
      </Middle>

      <Toolbox>
        <Strip><CloseX aria-label="Close">×</CloseX><span>Инструменты</span></Strip>
        <ToolMain>
          <LogTable>
            <colgroup><col width="99" /><col width="113" /><col /></colgroup>
            <thead><tr><th>Время</th><th>Источник</th><th>Сообщение</th></tr></thead>
            <tbody>
              {["2022.06.15 15:36:13.437", "2022.06.15 15:36:52.996"].map((t) => (
                <tr key={t}><td>•&nbsp;&nbsp; {t}</td><td>VR Watch list and linker (EURU...</td><td>CodeDeinit Program code.mqh was recompiled</td></tr>
              ))}
            </tbody>
          </LogTable>
          <BottomTabs>
            {[["Торговля"], ["Активы"], ["История"], ["Новости", "99"], ["Почта", "7"], ["Календарь"], ["Компания"], ["Алерты"], ["Статьи", "1"], ["Библиотека"], ["Эксперты"], ["Журнал"]].map(([t, n]) => (
              <Tab key={t} $l={6} $on={t === "Эксперты"}>{t}{n && <small>{n}</small>}</Tab>
            ))}
            <TabFill />
            <Services>
              <button><Icon n="bag" s={9} />Маркет</button>
              <button><Icon n="signal" s={10} />Сигналы</button>
              <button><Icon n="cloud" s={11} />VPS</button>
              <button><Svg s={9} c={G} w={1.6}><path d="M2 3l6-2 6 2v9l-6 3-6-3zM4 7l3 4 7-8" /></Svg>Тестер</button>
            </Services>
          </BottomTabs>
        </ToolMain>
      </Toolbox>
      <StatusBar>
        <StatusCell>Для вызова справки нажмите F1</StatusCell>
        <StatusCell>Default<Notches /></StatusCell>
        <StatusCell><Svg s={9} c={G} w={2.4}><path d="M2 15v-3M6 15V9M10 15V6M14 15V2" /></Svg>891 / 188 Kb</StatusCell>
      </StatusBar>
      <Taskbar>
        <span />
        <Apps>
          {APPS.map(([name, art, on]) => (
            <button key={name} aria-label={name}><Svg s={15}>{art}</Svg><Running $on={on} /></button>
          ))}
        </Apps>
        <Tray>
          <Svg s={8} c="#eee" w={2}><path d="M2 11l6-6 6 6" /></Svg>
          <Svg s={11} c="#ddd"><path d="M4 12a3 3 0 010-6 4 4 0 018 0 3 3 0 010 6z" fill="#ddd" /></Svg>
          <Svg s={10} c="#ddd" w={1.4}><path d="M3 8v5h10V8M8 2v8M5 7l3 3 3-3" /></Svg>
          <span>РУС</span>
          <Svg s={10} c="#ddd" w={1.6}><path d="M1 3h14v9H1zM5 15h6" /></Svg>
          <Svg s={10} c="#ddd" w={1.6}><path d="M1 6h3l4-4v12l-4-4H1zM11 5a4 4 0 010 6" /></Svg>
          <Clock dateTime="2022-06-15T15:43">15:43<br />15.06.2022</Clock>
          <Badge>30</Badge>
        </Tray>
      </Taskbar>
    </Screen>
  );
}
